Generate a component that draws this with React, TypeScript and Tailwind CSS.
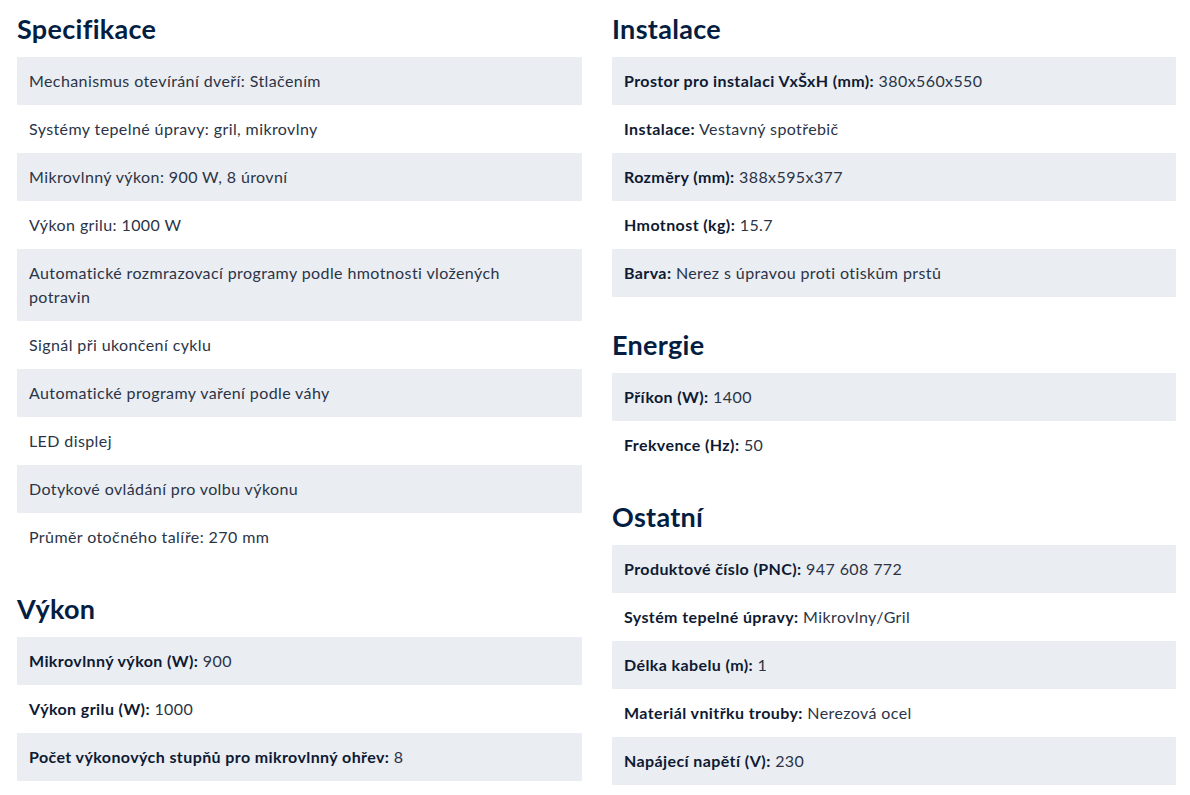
const specifikace = [
  "Mechanismus otevírání dveří: Stlačením",
  "Systémy tepelné úpravy: gril, mikrovlny",
  "Mikrovlnný výkon: 900 W, 8 úrovní",
  "Výkon grilu: 1000 W",
  "Automatické rozmrazovací programy podle hmotnosti vložených potravin",
  "Signál při ukončení cyklu",
  "Automatické programy vaření podle váhy",
  "LED displej",
  "Dotykové ovládání pro volbu výkonu",
  "Průměr otočného talíře: 270 mm",
];

const vykon = [
  ["Mikrovlnný výkon (W)", "900"],
  ["Výkon grilu (W)", "1000"],
  ["Počet výkonových stupňů pro mikrovlnný ohřev", "8"],
];

const instalace = [
  ["Prostor pro instalaci VxŠxH (mm)", "380x560x550"],
  ["Instalace", "Vestavný spotřebič"],
  ["Rozměry (mm)", "388x595x377"],
  ["Hmotnost (kg)", "15.7"],
  ["Barva", "Nerez s úpravou proti otiskům prstů"],
];

const energie = [
  ["Příkon (W)", "1400"],
  ["Frekvence (Hz)", "50"],
];

const ostatni = [
  ["Produktové číslo (PNC)", "947 608 772"],
  ["Systém tepelné úpravy", "Mikrovlny/Gril"],
  ["Délka kabelu (m)", "1"],
  ["Materiál vnitřku trouby", "Nerezová ocel"],
  ["Napájecí napětí (V)", "230"],
];

function Heading({ children, first }: { children: string; first?: boolean }) {
  return (
    <h2
      className={`${first ? "" : "mt-[19px]"} h-[57px] flex items-center text-[27px] tracking-[0.3px] font-bold text-[#041e42] leading-none`}
    >
      {children}
    </h2>
  );
}

function Row({ i, children }: { i: number; children: React.ReactNode }) {
  return (
    <li
      className={`${i % 2 === 0 ? "bg-[#eaedf1]" : ""} px-3 py-3 text-[16px] tracking-[0.4px] leading-6 text-[#2b3447]`}
    >
      {children}
    </li>
  );
}

function PairList({ items }: { items: string[][] }) {
  return (
    <ul>
      {items.map(([k, v], i) => (
        <Row key={k} i={i}>
          <span className="font-bold text-[#0e1a33]">{k}:</span> {v}
        </Row>
      ))}
    </ul>
  );
}

export default function App() {
  return (
    <div className="bg-white w-[1190px] h-[795px] overflow-hidden font-['Lato',sans-serif]">
      <div className="grid grid-cols-[565px_564px] gap-[30px] pl-[17px]">
        <div>
          <Heading first>Specifikace</Heading>
          <ul>
            {specifikace.map((t, i) => (
              <Row key={t} i={i}>
                <span className="block max-w-[500px]">{t}</span>
              </Row>
            ))}
          </ul>
          <Heading>Výkon</Heading>
          <PairList items={vykon} />
        </div>
        <div>
          <Heading first>Instalace</Heading>
          <PairList items={instalace} />
          <Heading>Energie</Heading>
          <PairList items={energie} />
          <Heading>Ostatní</Heading>
          <PairList items={ostatni} />
        </div>
      </div>
    </div>
  );
}
